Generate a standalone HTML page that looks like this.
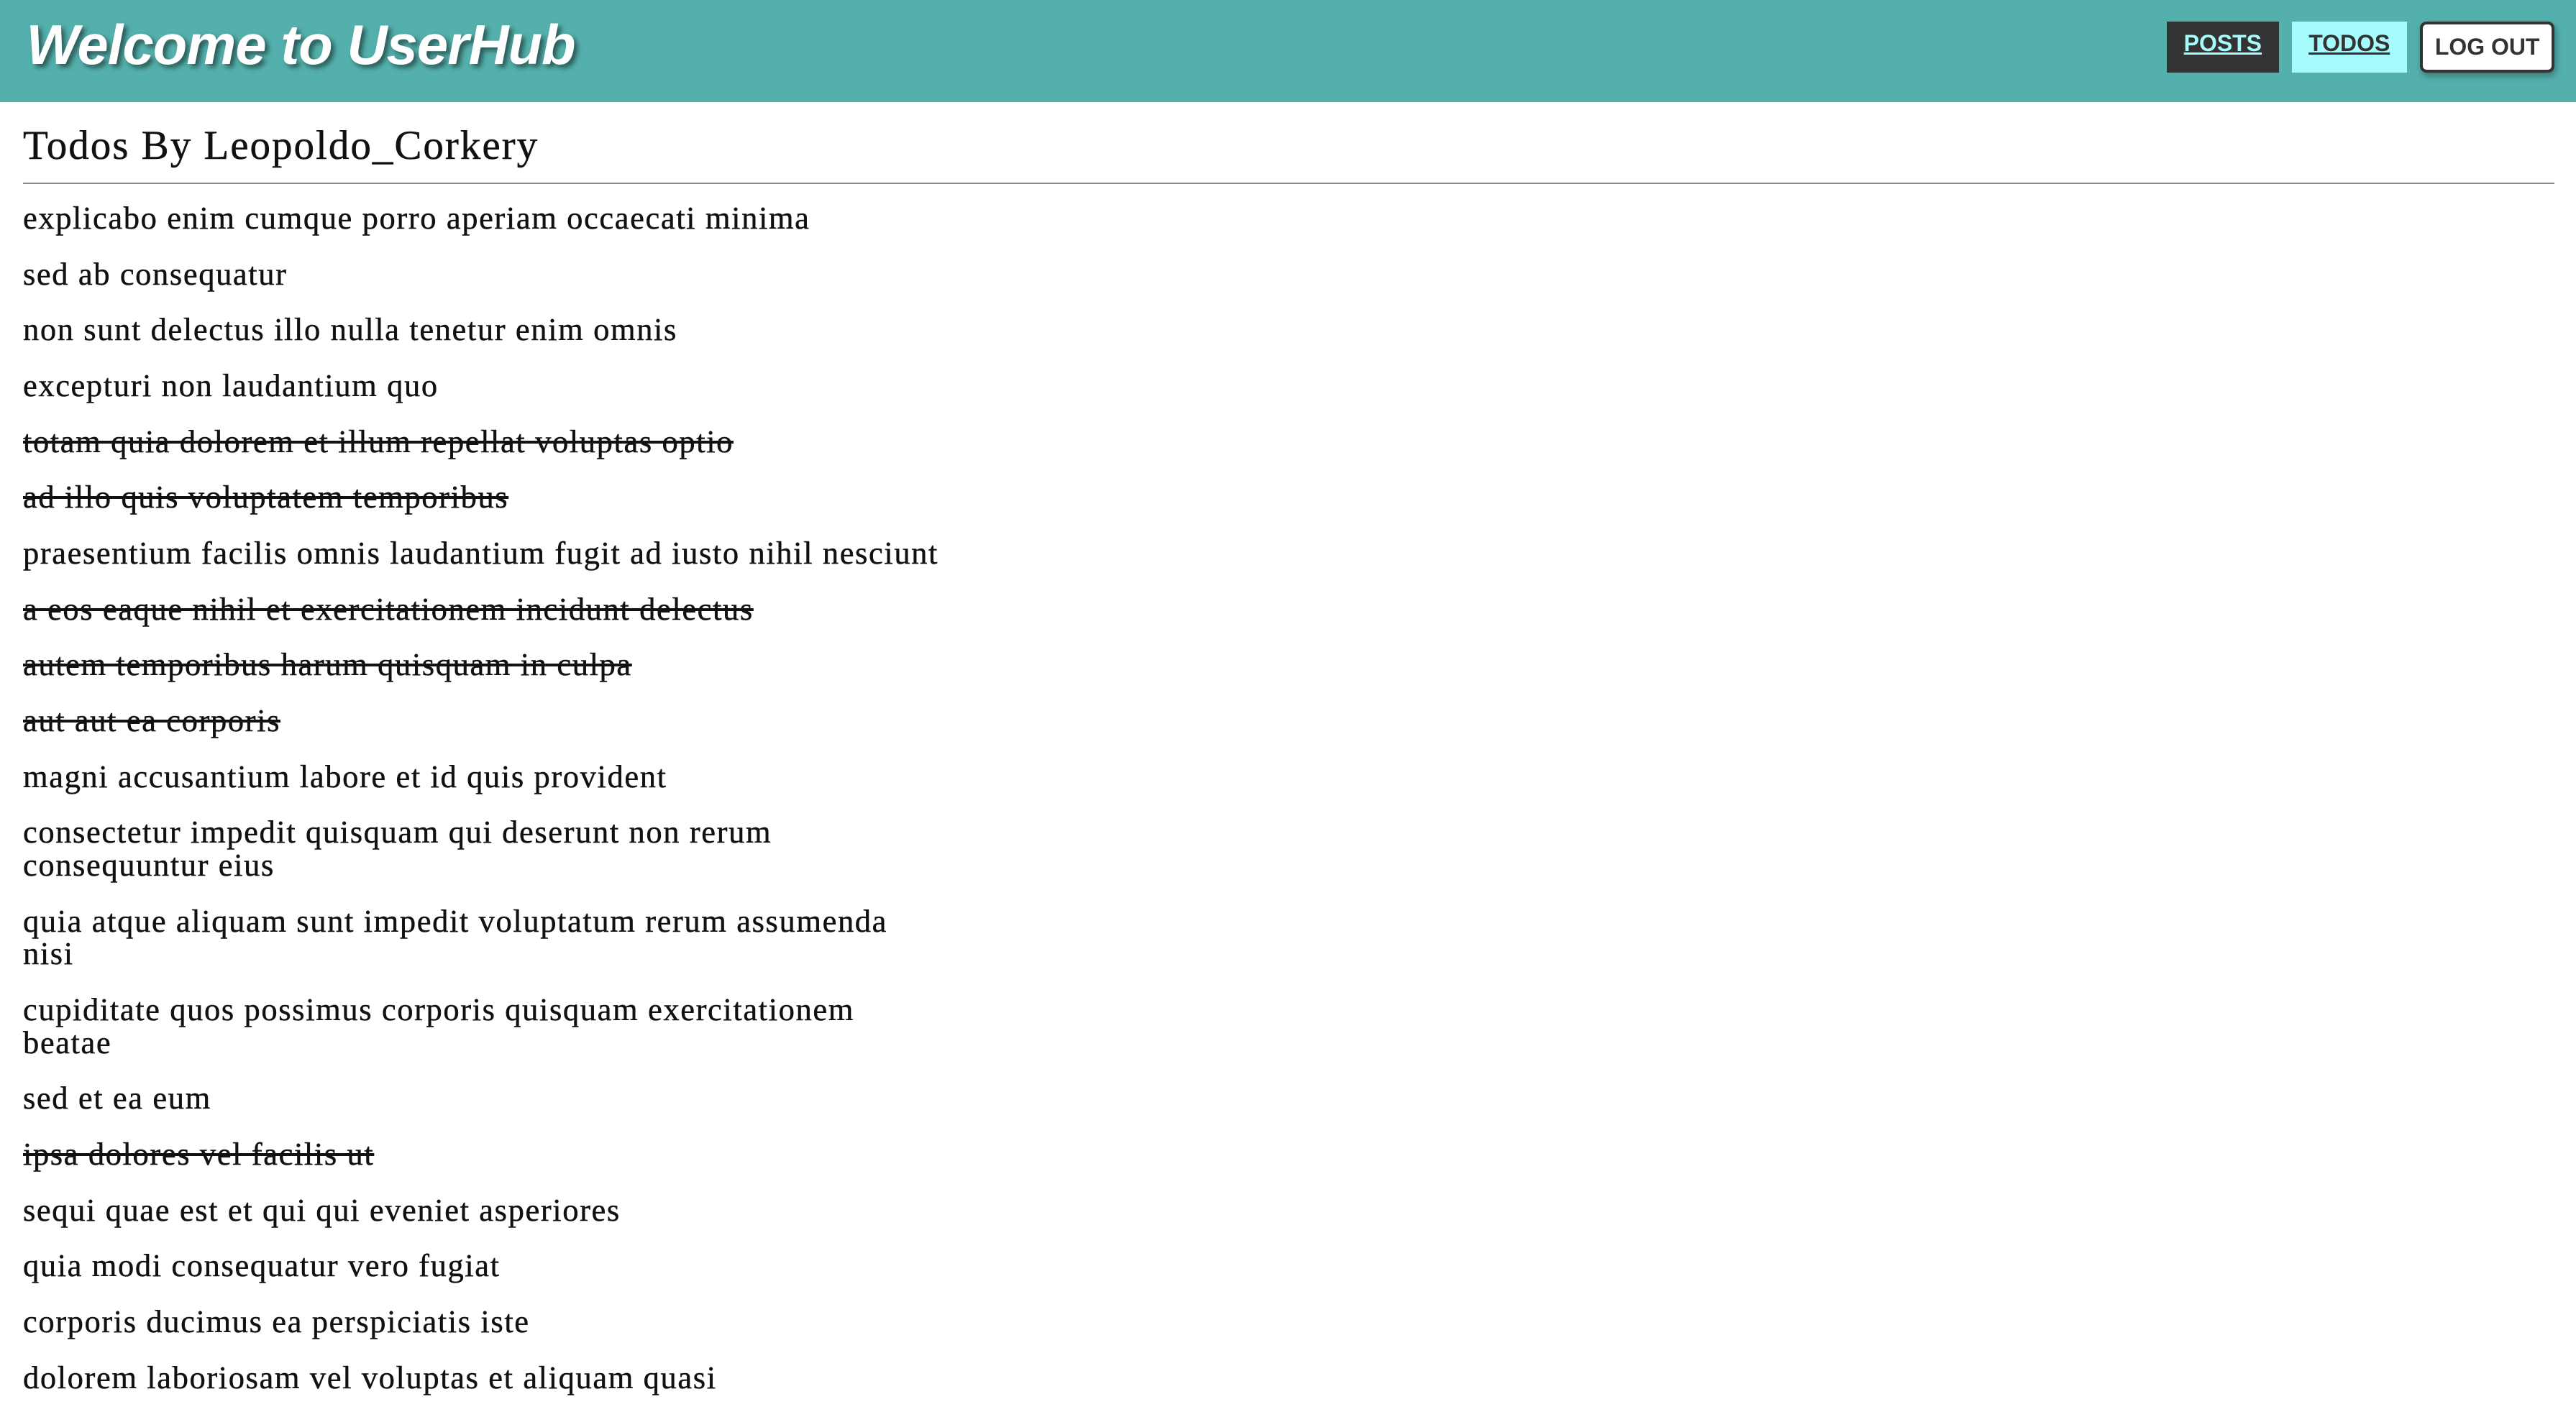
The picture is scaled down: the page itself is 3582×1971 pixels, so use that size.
<!DOCTYPE html>
<html><head><meta charset="utf-8">
<style>
html,body{margin:0;padding:0;background:#fff;}
body{width:1568px;height:842px;overflow:hidden;zoom:2.28444;position:relative;font-family:"Liberation Serif",serif;color:#111;}
.hdr{position:absolute;left:0;top:0;width:1568px;height:62px;background:#54b0ac;}
.title{position:absolute;left:16px;top:8px;font-family:"Liberation Sans",sans-serif;font-weight:bold;font-style:italic;font-size:34px;line-height:40px;color:#fff;letter-spacing:-0.4px;text-shadow:2px 2px 3px rgba(0,0,0,.5);}
.btn{position:absolute;top:13px;height:31px;box-sizing:border-box;font-family:"Liberation Sans",sans-serif;font-weight:bold;font-size:14px;display:flex;align-items:center;justify-content:center;}
.posts{left:1319px;width:68px;background:#333;color:#a6fcfc;text-decoration:underline;padding-bottom:4px;}
.todos{left:1395px;width:70px;background:#a6fcfc;color:#333;text-decoration:underline;padding-bottom:4px;}
.logout{left:1473px;width:82px;background:#fff;color:#333;border:2px solid #333;border-radius:4px;box-shadow:1px 2px 4px rgba(0,0,0,.3);}
h1{position:absolute;left:14px;top:74px;margin:0;font-weight:normal;font-size:25px;line-height:30px;letter-spacing:0.85px;-webkit-text-stroke:0.2px #111;}
.hr{position:absolute;left:14px;top:111px;width:1541px;height:1px;background:#888;}
ul{position:absolute;left:14px;top:123px;margin:0;padding:0;list-style:none;font-size:19.5px;line-height:20px;letter-spacing:0.7px;-webkit-text-stroke:0.2px #111;}
li{margin:0 0 14px 0;white-space:nowrap;}
.s{text-decoration:line-through;}
</style></head><body>
<div class="hdr">
<div class="title">Welcome to UserHub</div>
<div class="btn posts">POSTS</div>
<div class="btn todos">TODOS</div>
<div class="btn logout">LOG OUT</div>
</div>
<h1>Todos By Leopoldo_Corkery</h1>
<div class="hr"></div>
<ul>
<li>explicabo enim cumque porro aperiam occaecati minima</li>
<li>sed ab consequatur</li>
<li>non sunt delectus illo nulla tenetur enim omnis</li>
<li>excepturi non laudantium quo</li>
<li class="s">totam quia dolorem et illum repellat voluptas optio</li>
<li class="s">ad illo quis voluptatem temporibus</li>
<li>praesentium facilis omnis laudantium fugit ad iusto nihil nesciunt</li>
<li class="s">a eos eaque nihil et exercitationem incidunt delectus</li>
<li class="s">autem temporibus harum quisquam in culpa</li>
<li class="s">aut aut ea corporis</li>
<li>magni accusantium labore et id quis provident</li>
<li>consectetur impedit quisquam qui deserunt non rerum<br>consequuntur eius</li>
<li>quia atque aliquam sunt impedit voluptatum rerum assumenda<br>nisi</li>
<li>cupiditate quos possimus corporis quisquam exercitationem<br>beatae</li>
<li>sed et ea eum</li>
<li class="s">ipsa dolores vel facilis ut</li>
<li>sequi quae est et qui qui eveniet asperiores</li>
<li>quia modi consequatur vero fugiat</li>
<li>corporis ducimus ea perspiciatis iste</li>
<li>dolorem laboriosam vel voluptas et aliquam quasi</li>
</ul>
</body></html>
